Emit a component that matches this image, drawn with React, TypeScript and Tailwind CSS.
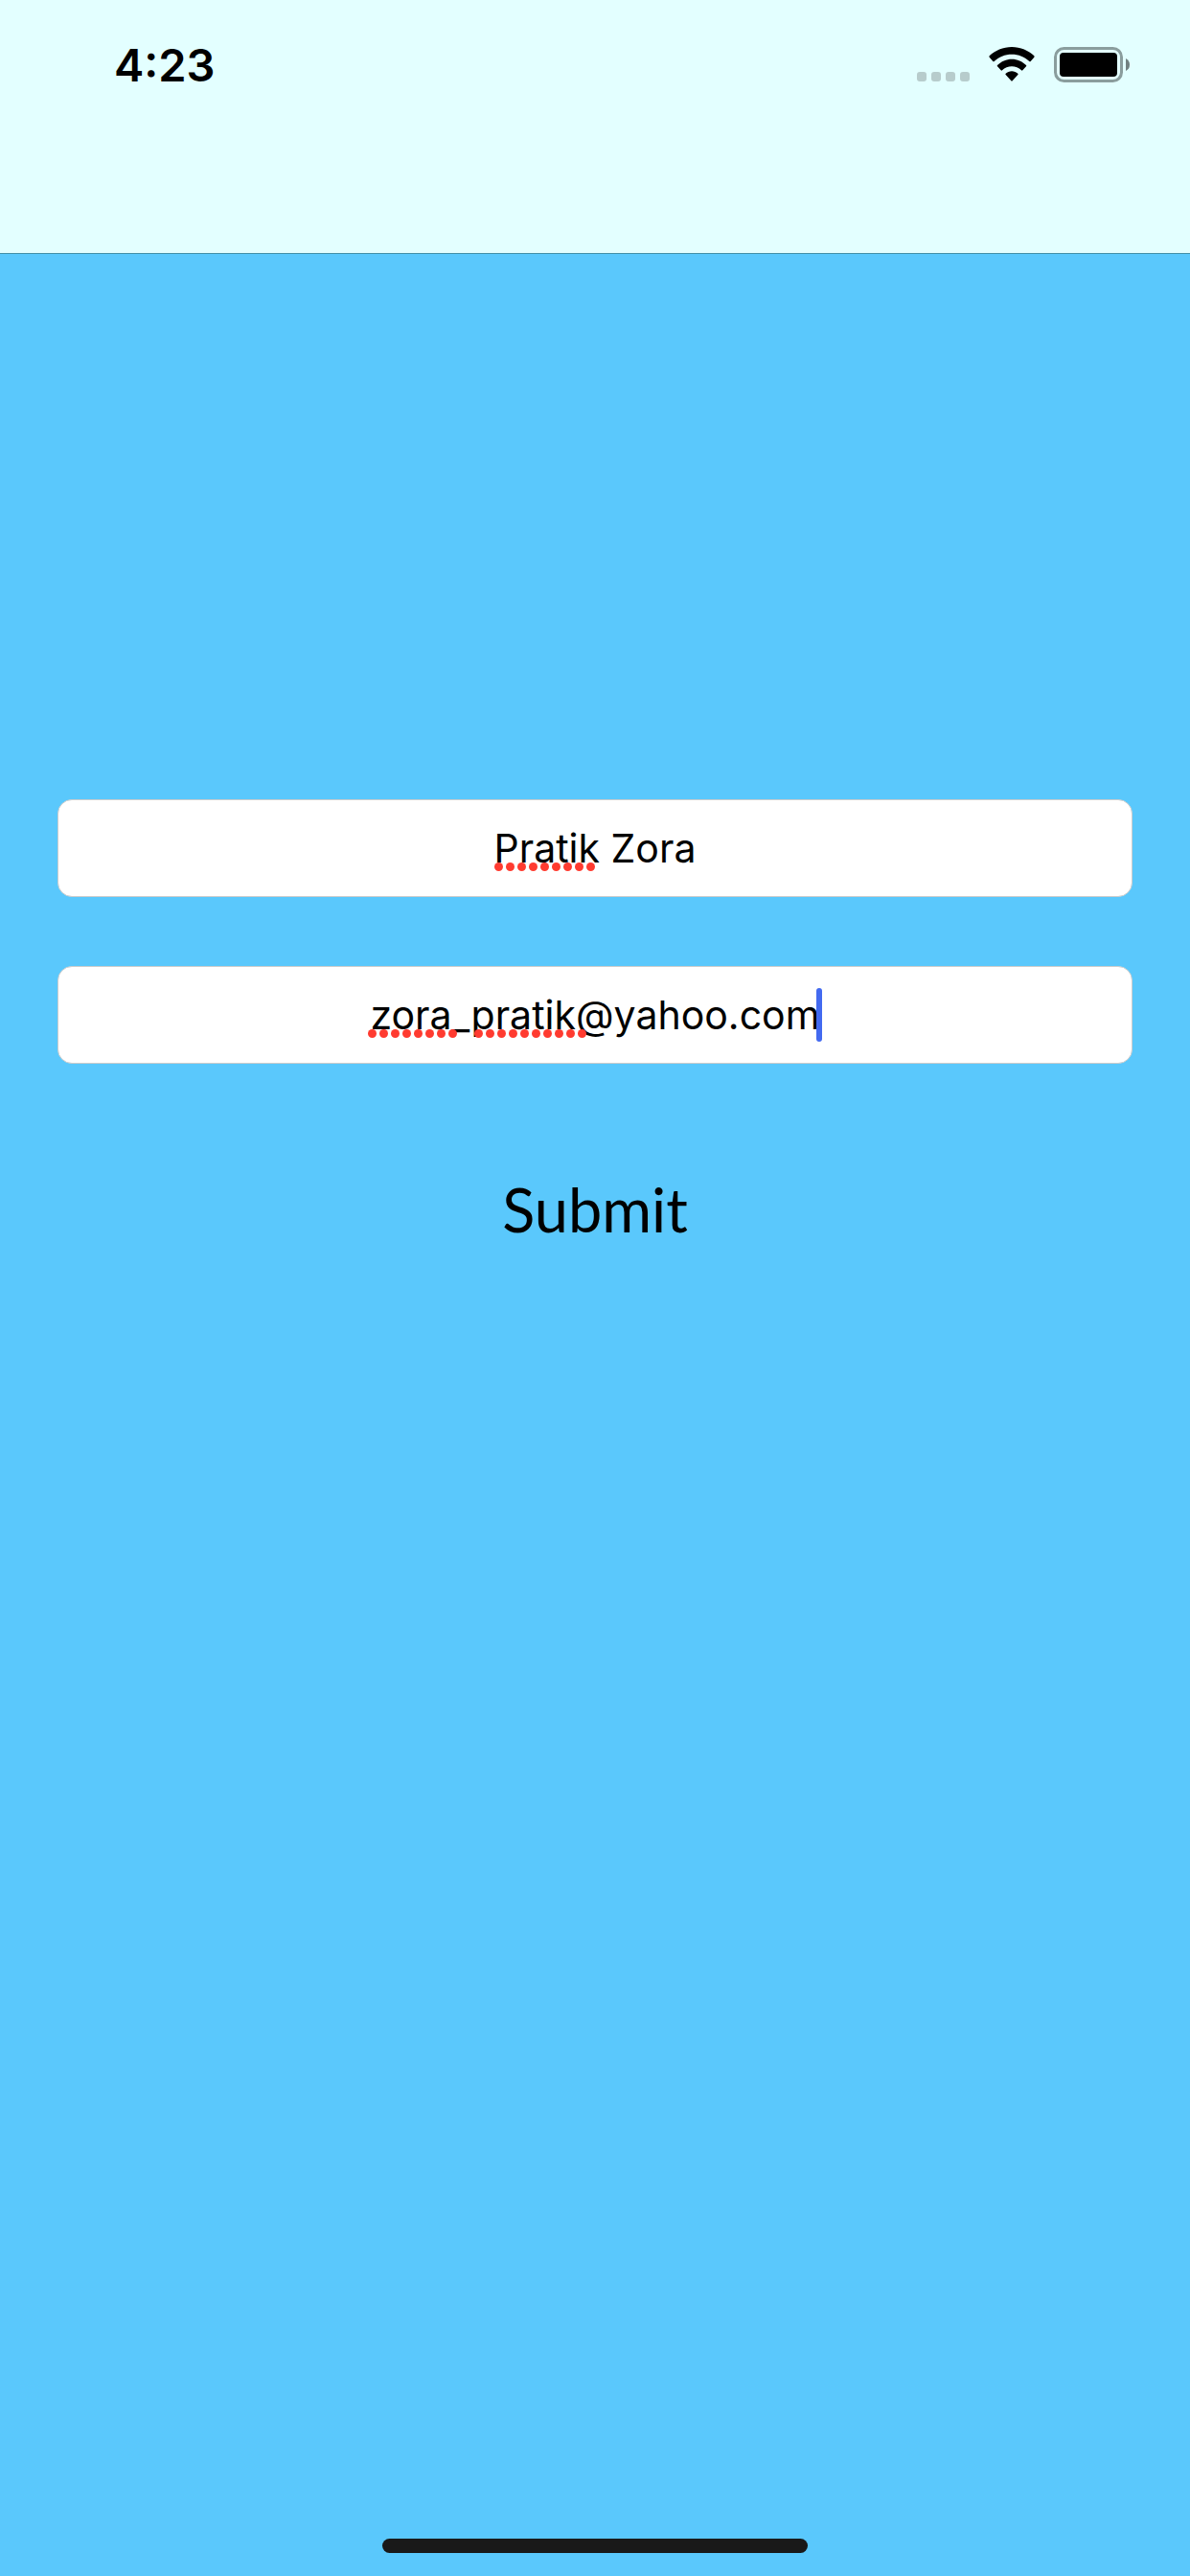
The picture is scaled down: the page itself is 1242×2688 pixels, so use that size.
function SpellingDots({ count, className }: { count: number; className: string }) {
  return (
    <span aria-hidden="true" className={`pointer-events-none absolute flex gap-[3px] ${className}`}>
      {Array.from({ length: count }, (_, i) => (
        <span key={i} className="size-[9px] rounded-full bg-[#ff3b30]" />
      ))}
    </span>
  );
}

const fieldClass =
  "block h-[102px] w-full rounded-[15px] border border-[#cccccc] bg-white px-5 text-center text-[41px] text-black caret-transparent outline-none";

function StatusIcons() {
  return (
    <div className="flex items-start">
      <svg aria-label="No signal" width="55" height="10" viewBox="0 0 55 10" className="mt-[26px]" fill="#b7cccc">
        <rect width="10" height="10" rx="3" />
        <rect x="15" width="10" height="10" rx="3" />
        <rect x="30" width="10" height="10" rx="3" />
        <rect x="45" width="10" height="10" rx="3" />
      </svg>
      <svg aria-label="Wi-Fi" width="48" height="36" viewBox="0 0 144 108" className="ml-5">
        <path d="M72 0C99 0 125 11 142 28Q144 30 142 32L131 45Q129 47 127 45C113 31 93 23 72 23S31 31 17 45Q15 47 13 45L2 32Q0 30 2 28C19 11 45 0 72 0Z" />
        <path d="M72 38C89 38 105 45 117 57Q119 59 117 61L106 73Q104 75 102 73C94 65 83 61 72 61S50 65 42 73Q40 75 38 73L27 61Q25 59 27 57C39 45 55 38 72 38Z" />
        <path d="M72 76C79 76 86 79 91 83Q93 85 91 87L74 106Q72 108 70 106L53 87Q51 85 53 83C58 79 65 76 72 76Z" />
      </svg>
      <svg aria-label="Battery full" width="79" height="37" viewBox="0 0 79 37" className="ml-5">
        <rect x="1.5" y="1.5" width="69" height="34" rx="9" fill="none" stroke="#8a9d9d" strokeWidth="3" />
        <rect x="6" y="6" width="60" height="25" rx="4" />
        <path d="M75 12Q79 14 79 18.500T75 25Z" fill="#718080" />
      </svg>
    </div>
  );
}

export default function App() {
  return (
    <div className="flex min-h-screen flex-col bg-[#5ac8fc] font-['Inter','Liberation_Sans',sans-serif] text-black">
      <header className="h-[265px] border-b border-[#4390a9] bg-[#e3ffff]">
        <div className="flex items-start justify-between pt-[49px] pr-[63px] pl-[119px]">
          <time className="-mt-2 text-[47px] leading-[54px] font-semibold">4:23</time>
          <StatusIcons />
        </div>
      </header>
      <main className="flex-1 px-[60px] pt-[569px]">
        <form className="flex flex-col items-center" onSubmit={(e) => e.preventDefault()}>
          <div className="relative w-full">
            <input aria-label="Name" type="text" defaultValue="Pratik Zora" spellCheck={false} className={fieldClass} />
            <SpellingDots count={9} className="top-[66px] left-[calc(50%-105px)]" />
          </div>
          <div className="relative mt-[72px] w-full">
            <input
              aria-label="Email"
              type="text"
              defaultValue="zora_pratik@yahoo.com"
              spellCheck={false}
              className={fieldClass}
            />
            <SpellingDots count={8} className="top-[66px] left-[calc(50%-237px)]" />
            <SpellingDots count={10} className="top-[66px] left-[calc(50%-126px)]" />
            <span className="absolute top-[23px] left-[calc(50%+231px)] h-14 w-[6px] rounded-full bg-[#436af0]" />
          </div>
          <button type="submit" className="mt-28 font-['Lato',sans-serif] text-[63px] leading-[80px]">
            Submit
          </button>
        </form>
      </main>
      <footer className="flex justify-center pb-6">
        <div className="h-[15px] w-[444px] rounded-full bg-[#191919]" />
      </footer>
    </div>
  );
}
